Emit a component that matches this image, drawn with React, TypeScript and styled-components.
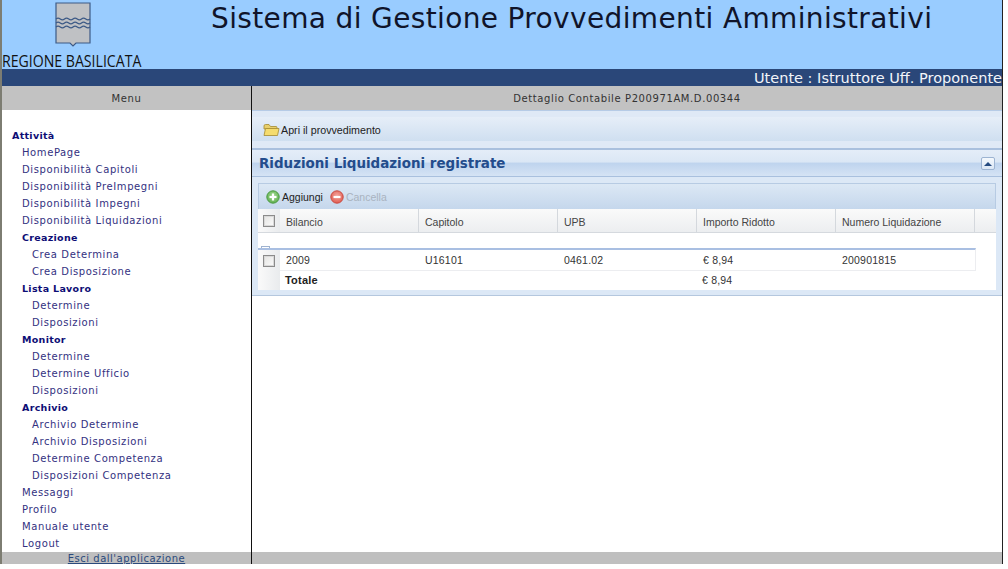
import React from "react";
import styled, { createGlobalStyle } from "styled-components";

const GlobalStyle = createGlobalStyle`
  html, body {
    margin: 0;
    padding: 0;
    background: #fff;
    font-family: "DejaVu Sans", sans-serif;
  }
`;

const Page = styled.div`
  width: 1003px;
  height: 564px;
  box-sizing: border-box;
  border-left: 2px solid #7d7d72;
  border-right: 1px solid #222;
  display: flex;
  flex-direction: column;
  overflow: hidden;
`;

const Header = styled.header`
  height: 69px;
  flex: none;
  background: #99ccff;
  display: flex;
`;

const LogoBox = styled.div`
  width: 209px;
  flex: none;
  display: flex;
  flex-direction: column;
  padding-top: 2px;
  box-sizing: border-box;
`;

const Crest = styled.svg`
  width: 36px;
  height: 45px;
  margin-left: 53px;
  flex: none;
`;

const RegionName = styled.div`
  font-family: "Open Sans", sans-serif;
  font-size: 15.5px;
  line-height: 18px;
  margin-top: 5px;
  color: #111;
  white-space: nowrap;
  transform-origin: left;
  transform: scaleX(0.91);
`;

const Title = styled.h1`
  margin: 0;
  padding-top: 1px;
  font-weight: normal;
  font-size: 28px;
  line-height: 36px;
  letter-spacing: 0.36px;
  color: #10142a;
  white-space: nowrap;
`;

const UserBar = styled.div`
  height: 17px;
  flex: none;
  background: #2a4779;
  color: #f2f5fa;
  text-align: right;
  font-size: 14.5px;
  line-height: 18px;
  white-space: nowrap;
`;

const Body = styled.div`
  flex: 1;
  display: flex;
  min-height: 0;
`;

const Sidebar = styled.aside`
  width: 249px;
  flex: none;
  border-right: 1px solid #111;
  display: flex;
  flex-direction: column;
`;

const GreyHeading = styled.div`
  height: 24px;
  flex: none;
  background: #c2c2c2;
  color: #333;
  text-align: center;
  font-size: 10px;
  letter-spacing: 0.6px;
  line-height: 25px;
  white-space: nowrap;
`;

const MenuList = styled.nav`
  flex: 1;
  padding-top: 17px;
`;

const MenuItem = styled.div<{ $level: number; $bold?: boolean }>`
  height: 17px;
  line-height: 17px;
  padding-left: ${(p) => 10 + p.$level * 10}px;
  font-size: ${(p) => (p.$bold ? "9.5px" : "10px")};
  letter-spacing: ${(p) => (p.$bold ? "0.3px" : "0.6px")};
  font-weight: ${(p) => (p.$bold ? "bold" : "normal")};
  color: ${(p) => (p.$bold ? "#0d0d75" : "#33317f")};
  white-space: nowrap;
`;

const Main = styled.main`
  flex: 1;
  min-width: 0;
  display: flex;
  flex-direction: column;
`;

const ActionPanel = styled.div`
  height: 40px;
  flex: none;
  box-sizing: border-box;
  border-top: 1px solid #b6cbe6;
  border-bottom: 2px solid #a9c0de;
  background: #dfe9f6;
  padding: 6px 0 7px 0;
`;

const ActionStrip = styled.div`
  height: 100%;
  box-sizing: border-box;
  padding: 1px 0 0 11px;
  background: linear-gradient(#e6eef8, #cfdff0);
  display: flex;
  align-items: center;
  gap: 1px;
  font-family: "Liberation Sans", sans-serif;
  font-size: 10.7px;
  color: #222;
`;

const Panel = styled.section`
  height: 146px;
  flex: none;
  box-sizing: border-box;
  background: #dce8f6;
  border-bottom: 1px solid #b4c7de;
  display: flex;
  flex-direction: column;
`;

const PanelHead = styled.div`
  height: 27px;
  flex: none;
  box-sizing: border-box;
  border-bottom: 1px solid #a9c0de;
  background: linear-gradient(#e4edf8 0%, #dbe7f5 45%, #bfd4ee 52%, #d5e3f4 100%);
  display: flex;
  align-items: center;
  justify-content: space-between;
  padding: 1px 7px 0 7px;
`;

const PanelTitle = styled.h2`
  margin: 0;
  font-size: 13.45px;
  font-weight: bold;
  color: #234c8c;
  white-space: nowrap;
`;

const CollapseButton = styled.div`
  width: 14px;
  height: 13px;
  box-sizing: border-box;
  border: 1px solid #9db4d2;
  border-radius: 2px;
  background: linear-gradient(#f4f8fd, #dbe7f5);
  display: flex;
  align-items: center;
  justify-content: center;
  &::before {
    content: "";
    border-left: 4px solid transparent;
    border-right: 4px solid transparent;
    border-bottom: 4px solid #244a80;
  }
`;

const PanelBody = styled.div`
  flex: 1;
  padding: 6px 6px 5px 6px;
  display: flex;
  flex-direction: column;
  font-family: "Liberation Sans", sans-serif;
  font-size: 10.5px;
`;

const GridToolbar = styled.div`
  height: 26px;
  flex: none;
  box-sizing: border-box;
  border: 1px solid #b7cbe3;
  border-bottom: none;
  background: linear-gradient(#dce8f5, #c5d7ec);
  display: flex;
  align-items: center;
  padding-left: 7px;
`;

const ToolButton = styled.span<{ $disabled?: boolean }>`
  display: flex;
  align-items: center;
  gap: 2px;
  margin-right: 7px;
  color: ${(p) => (p.$disabled ? "#a9b3bf" : "#222")};
`;

const GridArea = styled.div`
  flex: 1;
  background: #fff;
  position: relative;
  display: flex;
  flex-direction: column;
`;

const Row = styled.div`
  display: grid;
  grid-template-columns: 22px repeat(4, 139px) 139px 1fr;
  flex: none;
`;

const HeaderRow = styled(Row)`
  height: 24px;
  box-sizing: border-box;
  background: linear-gradient(#fafafa, #eceef0);
  border-bottom: 1px solid #d5d9de;
  color: #444;
`;

const HeaderCell = styled.div`
  border-right: 1px solid #d4d8dd;
  padding: 1px 0 0 6px;
  line-height: 25px;
  height: 23px;
  box-sizing: border-box;
  white-space: nowrap;
`;

const CheckCell = styled.div<{ $shaded?: boolean }>`
  display: flex;
  align-items: center;
  justify-content: center;
  background: ${(p) => (p.$shaded ? "linear-gradient(90deg, #fafafa, #e9ebed)" : "transparent")};
`;

const Checkbox = styled.span`
  width: 12px;
  height: 12px;
  box-sizing: border-box;
  border: 1px solid #8b8b8b;
  background: linear-gradient(135deg, #e4e4e2, #fbfbfb);
  box-shadow: inset 0 0 0 1px #d8d8d8;
`;

const Spacer = styled.div`
  height: 15px;
  flex: none;
`;

const DataRow = styled(Row)`
  width: 718px;
  height: 23px;
  box-sizing: border-box;
  border-top: 2px solid #a9bfe2;
  border-bottom: 1px solid #ecedf0;
  border-right: 1px solid #ecedf0;
  color: #333;
`;

const DataCell = styled.div`
  padding-left: 6px;
  line-height: 21px;
  letter-spacing: 0.2px;
  white-space: nowrap;
`;

const TotalRow = styled(Row)`
  height: 19px;
  flex: none;
  color: #333;
`;

const TotalCell = styled.div<{ $bold?: boolean }>`
  padding-left: 5px;
  line-height: 18px;
  font-weight: ${(p) => (p.$bold ? "bold" : "normal")};
  font-size: ${(p) => (p.$bold ? "11px" : "10.5px")};
  letter-spacing: 0.2px;
  color: ${(p) => (p.$bold ? "#222" : "#333")};
`;

const Clipped = styled.span`
  position: absolute;
  left: 3px;
  top: 37px;
  width: 9px;
  height: 2px;
  border: 1px solid #9fb3d0;
  border-bottom: none;
  box-sizing: border-box;
`;

const FooterBar = styled.div`
  height: 12px;
  flex: none;
  position: relative;
  background: #bfbfbf;
  width: 249px;
  text-align: center;
  font-size: 10px;
  letter-spacing: 0.5px;
  line-height: 14px;
  color: #2a4a7c;
  text-decoration: underline;
  white-space: nowrap;
`;

const MainFooter = styled.div`
  flex: 1;
  background: #bfbfbf;
`;

const BottomRow = styled.div`
  display: flex;
  height: 12px;
  flex: none;
`;

const Divider = styled.div`
  width: 1px;
  background: #111;
  flex: none;
`;

const FolderIcon = () => (
  <svg width="17" height="14" viewBox="0 0 17 14">
    <path d="M1 3 Q1 1.5 2.5 1.5 H6 L7.5 3.5 H13 Q14 3.5 14 4.5 V6 H1 Z" fill="#e8cf6c" stroke="#a58a2e" strokeWidth="0.8" />
    <path d="M1 12.5 L2.5 5.5 H16 L14.5 12.5 Z" fill="#f5dc6e" stroke="#a58a2e" strokeWidth="0.8" />
  </svg>
);

const RoundIcon = ({ id, light, color, edge, plus }: { id: string; light: string; color: string; edge: string; plus?: boolean }) => (
  <svg width="14" height="14" viewBox="0 0 14 14">
    <defs>
      <radialGradient id={id} cx="0.5" cy="0.4" r="0.6">
        <stop offset="0" stopColor={light} />
        <stop offset="1" stopColor={color} />
      </radialGradient>
    </defs>
    <circle cx="7" cy="7" r="6.2" fill={`url(#${id})`} stroke={edge} strokeWidth="1" />
    <rect x="3.5" y="5.9" width="7" height="2.2" fill="#fff" />
    {plus && <rect x="5.9" y="3.5" width="2.2" height="7" fill="#fff" />}
  </svg>
);

const menu: [string, number, boolean?][] = [
  ["Attività", 0, true],
  ["HomePage", 1],
  ["Disponibilità Capitoli", 1],
  ["Disponibilità PreImpegni", 1],
  ["Disponibilità Impegni", 1],
  ["Disponibilità Liquidazioni", 1],
  ["Creazione", 1, true],
  ["Crea Determina", 2],
  ["Crea Disposizione", 2],
  ["Lista Lavoro", 1, true],
  ["Determine", 2],
  ["Disposizioni", 2],
  ["Monitor", 1, true],
  ["Determine", 2],
  ["Determine Ufficio", 2],
  ["Disposizioni", 2],
  ["Archivio", 1, true],
  ["Archivio Determine", 2],
  ["Archivio Disposizioni", 2],
  ["Determine Competenza", 2],
  ["Disposizioni Competenza", 2],
  ["Messaggi", 1],
  ["Profilo", 1],
  ["Manuale utente", 1],
  ["Logout", 1],
];

const columns = ["Bilancio", "Capitolo", "UPB", "Importo Ridotto", "Numero Liquidazione"];
const values = ["2009", "U16101", "0461.02", "€ 8,94", "200901815"];
const wave = (y: number) => `M1 ${y} q2 -1.6 4.25 0 t4.25 0 t4.25 0 t4.25 0 t4.25 0 t4.25 0 t4.25 0 t4.25 0`;

export default function App() {
  return (
    <>
      <GlobalStyle />
      <Page>
        <Header>
          <LogoBox>
            <Crest viewBox="0 0 36 45">
              <path d="M1 1 H35 V41 H21 L18 44 L15 41 H1 Z" fill="#bfc1c4" stroke="#3d5a86" strokeWidth="1.2" />
              <path d={wave(17)} fill="none" stroke="#3d5a86" strokeWidth="1.3" />
              <path d={wave(21)} fill="none" stroke="#3d5a86" strokeWidth="1.3" />
              <path d={wave(25)} fill="none" stroke="#3d5a86" strokeWidth="1.3" />
            </Crest>
            <RegionName>REGIONE BASILICATA</RegionName>
          </LogoBox>
          <Title>Sistema di Gestione Provvedimenti Amministrativi</Title>
        </Header>
        <UserBar>Utente : Istruttore Uff. Proponente</UserBar>
        <Body>
          <Sidebar>
            <GreyHeading>Menu</GreyHeading>
            <MenuList>
              {menu.map(([label, level, bold], i) => (
                <MenuItem key={i} $level={level} $bold={bold}>
                  {label}
                </MenuItem>
              ))}
            </MenuList>
          </Sidebar>
          <Main>
            <GreyHeading>Dettaglio Contabile P200971AM.D.00344</GreyHeading>
            <ActionPanel>
              <ActionStrip>
                <FolderIcon />
                Apri il provvedimento
              </ActionStrip>
            </ActionPanel>
            <Panel>
              <PanelHead>
                <PanelTitle>Riduzioni Liquidazioni registrate</PanelTitle>
                <CollapseButton />
              </PanelHead>
              <PanelBody>
                <GridToolbar>
                  <ToolButton>
                    <RoundIcon id="addGloss" light="#a5dc95" color="#5fae4e" edge="#4c9a44" plus />
                    Aggiungi
                  </ToolButton>
                  <ToolButton $disabled>
                    <RoundIcon id="delGloss" light="#f4a79f" color="#e05c50" edge="#c94a42" />
                    Cancella
                  </ToolButton>
                </GridToolbar>
                <GridArea>
                  <HeaderRow>
                    <CheckCell $shaded>
                      <Checkbox />
                    </CheckCell>
                    {columns.map((c) => (
                      <HeaderCell key={c}>{c}</HeaderCell>
                    ))}
                    <div />
                  </HeaderRow>
                  <Spacer />
                  <Clipped />
                  <DataRow>
                    <CheckCell $shaded>
                      <Checkbox />
                    </CheckCell>
                    {values.map((v) => (
                      <DataCell key={v}>{v}</DataCell>
                    ))}
                  </DataRow>
                  <TotalRow>
                    <CheckCell $shaded />
                    <TotalCell $bold>Totale</TotalCell>
                    <TotalCell />
                    <TotalCell />
                    <TotalCell>€ 8,94</TotalCell>
                  </TotalRow>
                </GridArea>
              </PanelBody>
            </Panel>
          </Main>
        </Body>
        <BottomRow>
          <FooterBar>Esci dall'applicazione</FooterBar>
          <Divider />
          <MainFooter />
        </BottomRow>
      </Page>
    </>
  );
}
